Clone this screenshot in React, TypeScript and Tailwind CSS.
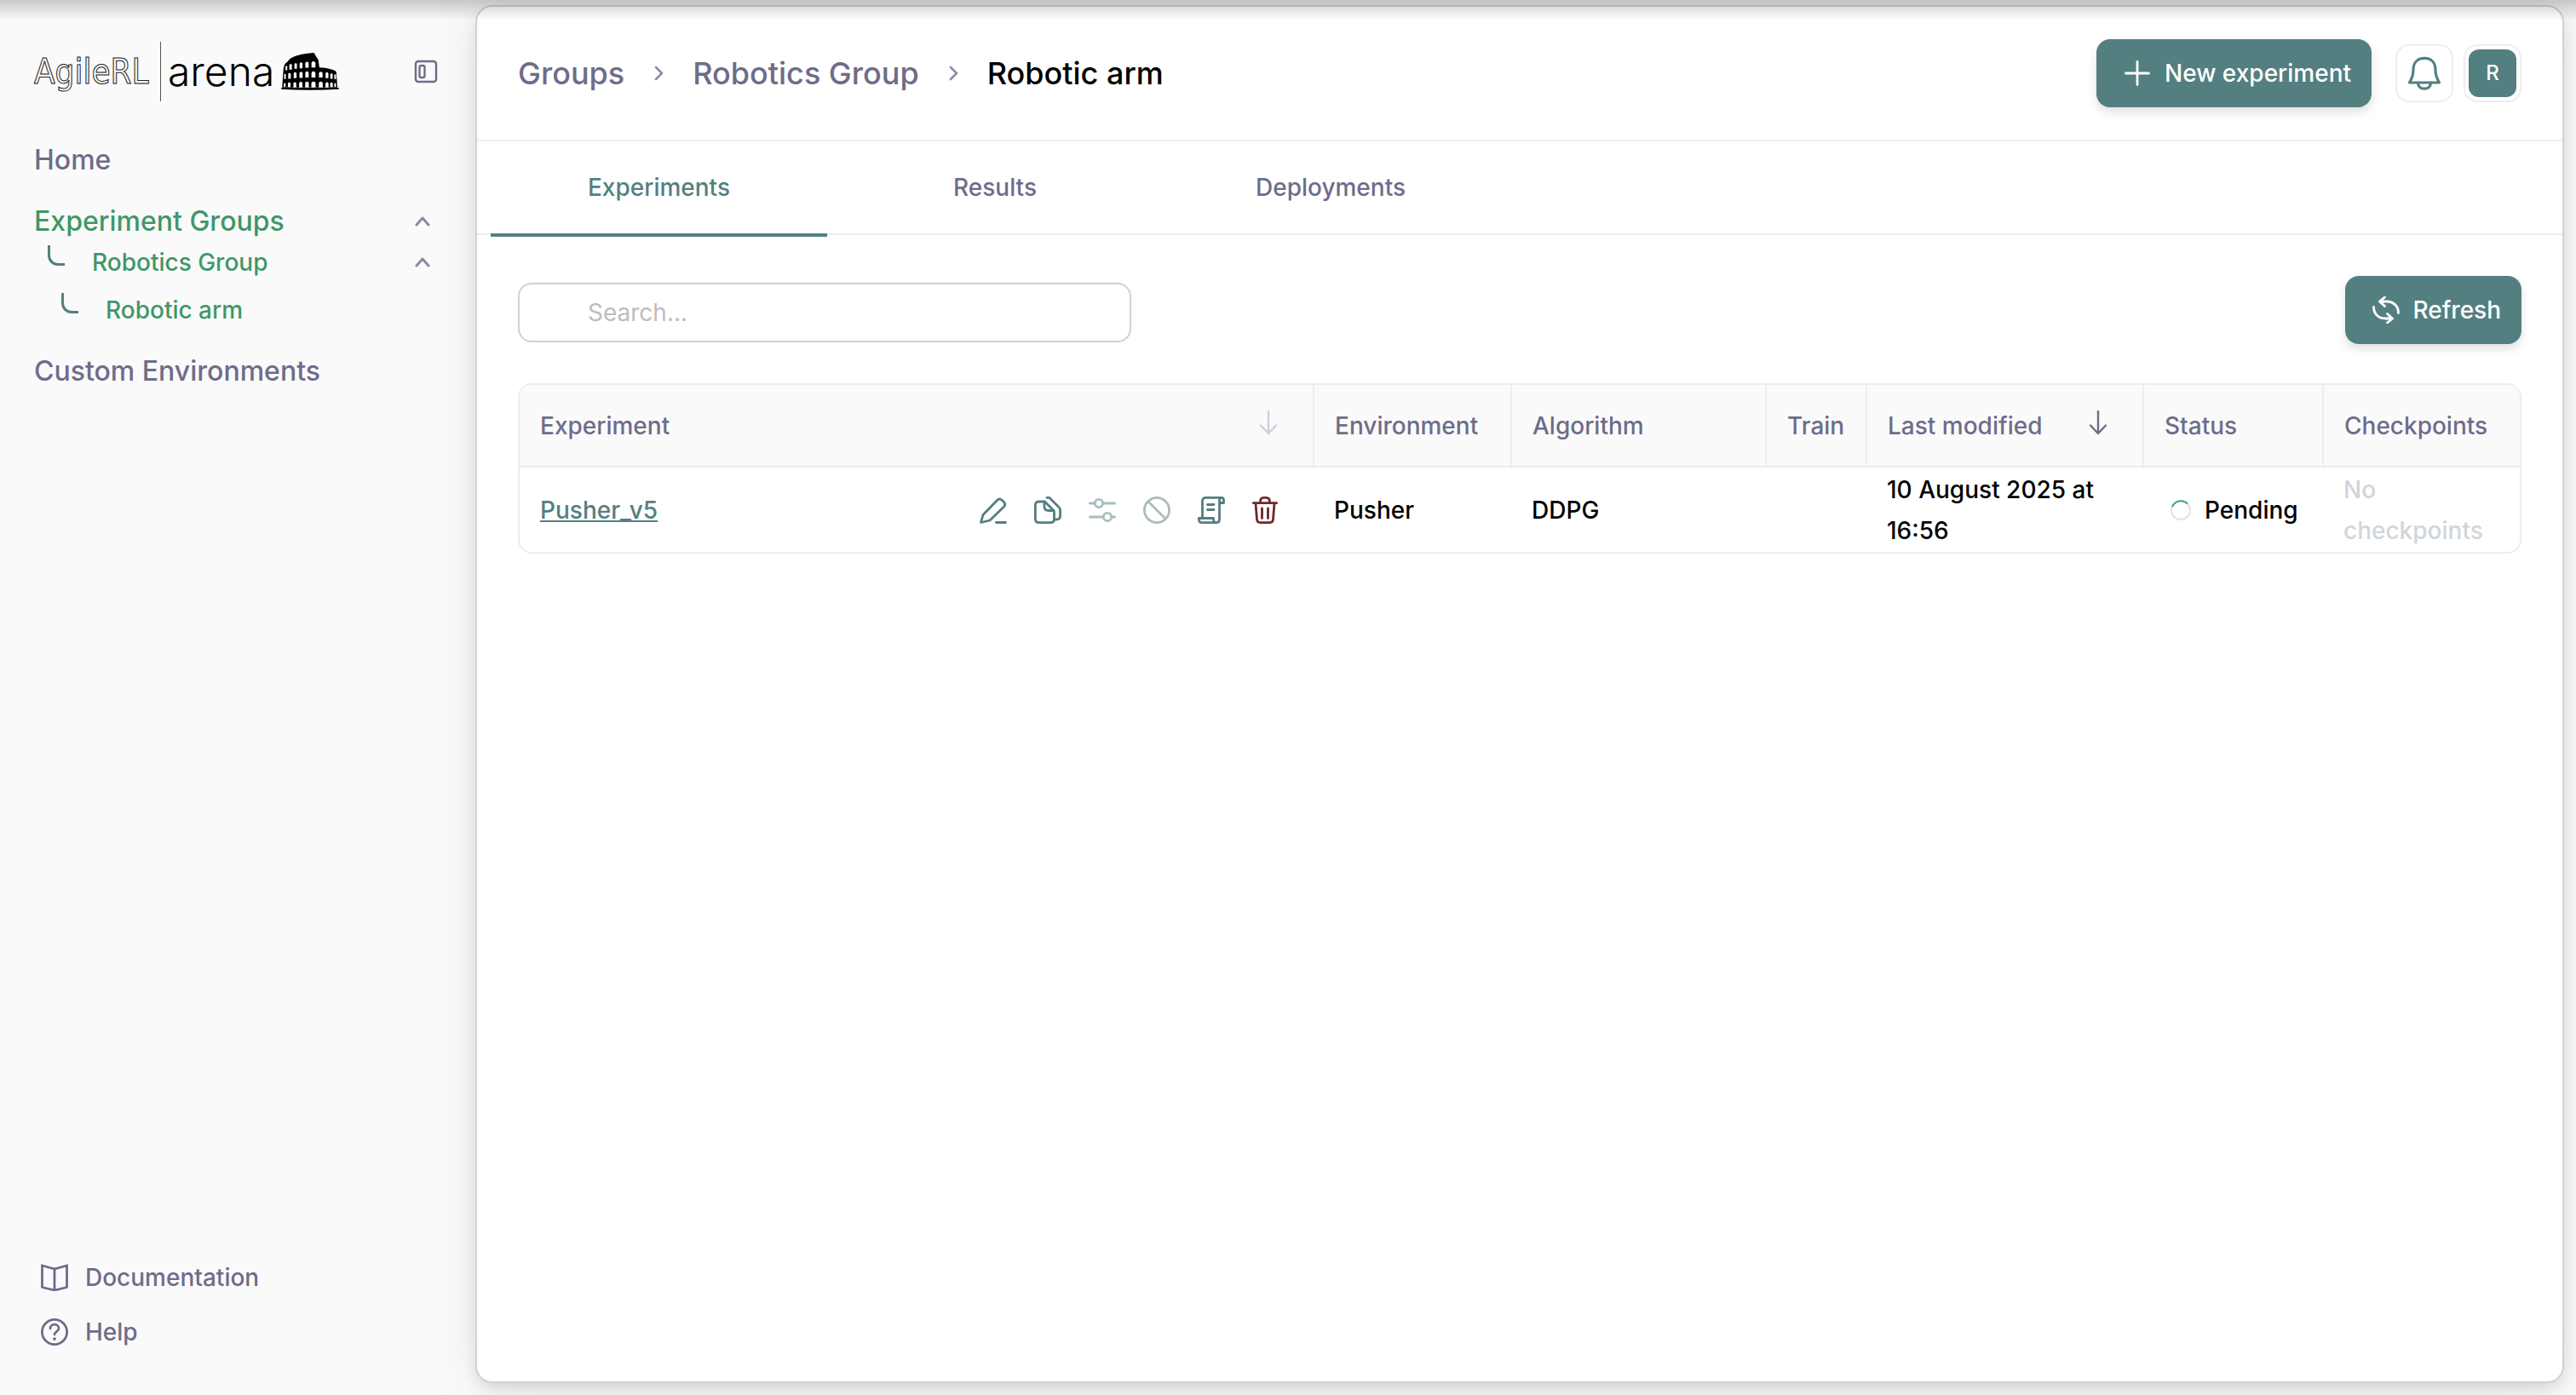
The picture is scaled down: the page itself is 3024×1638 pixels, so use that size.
import type { ReactNode } from "react";

type IconProps = { className?: string; children: ReactNode };

function Icon({ className = "", children }: IconProps) {
  return (
    <svg
      viewBox="0 0 32 32"
      fill="none"
      stroke="currentColor"
      strokeWidth="2.8"
      strokeLinecap="round"
      strokeLinejoin="round"
      className={`size-8 shrink-0 ${className}`}
      aria-hidden="true"
    >
      {children}
    </svg>
  );
}

// x centre, width, top, bottom of each arch
const arches = [
  [924, 6, 114, 130], [939, 9, 108, 128], [957, 9, 105, 125], [976, 10, 102, 123],
  [997, 12, 100, 121], [1020, 14, 98, 120],
  [919, 6, 143, 161], [935, 9, 140, 160], [955, 10, 137, 158], [976, 11, 135, 157],
  [997, 12, 134, 156], [1020, 14, 134, 156], [1046, 13, 135, 156], [1068, 10, 137, 158],
  [1084, 8, 141, 160], [1097, 6, 144, 162],
  [918, 6, 175, 189], [934, 9, 173, 190], [954, 10, 172, 191], [975, 12, 171, 191],
  [997, 13, 170, 191], [1020, 15, 170, 191], [1046, 14, 170, 191], [1068, 11, 172, 191],
  [1084, 9, 173, 190], [1097, 6, 175, 189],
];

function Colosseum() {
  return (
    <svg viewBox="906 68 204 133" className="h-11 w-[68px] shrink-0" aria-hidden="true">
      <path
        d="M909 191 L913 132 Q914 106 928 100 Q932 92 940 87 Q970 70 1022 68 L1030 82 L1037 92 L1041 120 L1062 122 Q1092 127 1101 135 L1105 191 Z"
        fill="#000"
      />
      <path d="M906 192 H1110 V197 Q1008 204 906 197 Z" fill="#000" />
      {arches.map(([x, w, top, bottom]) => (
        <path
          key={`${x}-${top}`}
          d={`M${x - w / 2} ${bottom} V${top + w / 2} A${w / 2} ${w / 2} 0 0 1 ${x + w / 2} ${top + w / 2} V${bottom} Z`}
          fill="#fafafa"
        />
      ))}
    </svg>
  );
}

function SidebarChevron() {
  return (
    <svg
      viewBox="0 0 18 12"
      fill="none"
      stroke="#8d8aa5"
      strokeWidth="3"
      strokeLinecap="round"
      strokeLinejoin="round"
      className="h-3 w-[18px]"
      aria-hidden="true"
    >
      <path d="M2 10l7-8 7 8" />
    </svg>
  );
}

function Sidebar() {
  return (
    <aside className="flex w-[558px] shrink-0 flex-col px-10 pb-[54px] pt-[49px] text-[#6e6c8a]">
      <div className="flex h-[70px] items-center justify-between pr-1">
        <a href="#" className="flex h-full items-center text-black">
          <span className="w-[148px] font-['DejaVu_Sans_Condensed','Liberation_Sans',sans-serif] text-[40px] leading-none text-transparent [-webkit-text-stroke:1px_#222]">
            AgileRL
          </span>
          <span className="h-full w-px bg-[#555]" />
          <span className="mx-2 text-[48px] font-light leading-none">arena</span>
          <Colosseum />
        </a>
        <button type="button" aria-label="Collapse sidebar">
          <svg
            viewBox="0 0 28 28"
            fill="none"
            stroke="currentColor"
            strokeWidth="2.4"
            className="size-7"
            aria-hidden="true"
          >
            <rect x="2" y="2" width="24" height="24" rx="3" />
            <rect x="6.5" y="7" width="6" height="14" rx="2" />
          </svg>
        </button>
      </div>

      <nav className="mt-[49px] flex flex-col font-medium">
        <a href="#" className="text-[32px] leading-10">
          Home
        </a>
        <div className="mt-8 flex items-center justify-between pr-[13px]">
          <a href="#" className="text-[32px] leading-10 text-[#3f9768]">
            Experiment Groups
          </a>
          <button type="button" aria-label="Toggle experiment groups">
            <SidebarChevron />
          </button>
        </div>
        <div className="mt-2 flex items-center justify-between pl-4 pr-[13px]">
          <div className="flex">
            <span className="h-6 w-5 rounded-bl-xl border-b-3 border-l-3 border-[#547f80]" />
            <a href="#" className="ml-8 text-[28px] leading-10 text-[#3f9768]">
              Robotics Group
            </a>
          </div>
          <button type="button" aria-label="Toggle Robotics Group">
            <SidebarChevron />
          </button>
        </div>
        <div className="mt-4 flex pl-8">
          <span className="h-6 w-5 rounded-bl-xl border-b-3 border-l-3 border-[#547f80]" />
          <a href="#" className="ml-8 text-[28px] leading-10 text-[#3f9768]">
            Robotic arm
          </a>
        </div>
        <a href="#" className="mt-8 text-[32px] leading-10">
          Custom Environments
        </a>
      </nav>

      <div className="mt-auto flex flex-col gap-6 pl-2 text-[28px] font-medium leading-10">
        <a href="#" className="flex items-center gap-5">
          <Icon>
            <path d="M1.5 2l14.5 4 14.5-4v25.5l-14.5 3.5-14.5-3.5z" strokeLinejoin="miter" />
            <path d="M16 6v25" />
          </Icon>
          Documentation
        </a>
        <a href="#" className="flex items-center gap-5">
          <Icon>
            <circle cx="16" cy="16" r="14.6" />
            <path d="M11 12c0-3 2.2-4.8 5-4.8s5 1.9 5 4.6c0 3.800-5 3.700-5 7.200" />
            <path d="M16 24v.3" strokeWidth="3.6" />
          </Icon>
          Help
        </a>
      </div>
    </aside>
  );
}

function CrumbChevron() {
  return (
    <svg
      viewBox="0 0 12 18"
      fill="none"
      stroke="#8d8aa5"
      strokeWidth="2.6"
      strokeLinecap="round"
      strokeLinejoin="round"
      className="h-[18px] w-3"
      aria-hidden="true"
    >
      <path d="M3 2l7 7-7 7" />
    </svg>
  );
}

function Header() {
  return (
    <header className="flex h-[158px] items-center justify-between border-b-2 border-[#ededed] px-12">
      <nav className="flex items-center gap-[34px] text-[36px] font-medium leading-none text-[#6e6c8a]">
        <a href="#">Groups</a>
        <CrumbChevron />
        <a href="#">Robotics Group</a>
        <CrumbChevron />
        <span className="text-black">Robotic arm</span>
      </nav>
      <div className="flex items-center">
        <button
          type="button"
          className="flex h-20 items-center gap-4 rounded-2xl bg-[#547f80] pl-8 pr-6 text-[28px] font-medium text-white shadow-[0_6px_12px_rgba(0,0,0,0.12)]"
        >
          <Icon>
            <path d="M16 2.500v27M2.500 16h27" />
          </Icon>
          New experiment
        </button>
        <button
          type="button"
          aria-label="Notifications"
          className="ml-7 flex size-[68px] items-center justify-center rounded-2xl border-2 border-[#ededed] text-[#547f80]"
        >
          <svg
            viewBox="0 0 40 40"
            fill="none"
            stroke="currentColor"
            strokeWidth="3.2"
            strokeLinecap="round"
            strokeLinejoin="round"
            className="size-10"
            aria-hidden="true"
          >
            <path d="M2.5 31C5.5 26 7 21 7 16C7 7.5 12 2.4 20 2.4S33 7.5 33 16C33 21 34.5 26 37.5 31Z" />
            <path d="M12.5 31c0 4.500 3 7.200 7.500 7.200s7.500-2.700 7.500-7.200" />
          </svg>
        </button>
        <button
          type="button"
          aria-label="Account"
          className="ml-3 flex size-[68px] items-center justify-center rounded-2xl border-2 border-[#ededed]"
        >
          <span className="flex size-14 items-center justify-center rounded-xl bg-[#547f80] text-[24px] font-medium text-white">
            R
          </span>
        </button>
      </div>
    </header>
  );
}

const tabs = ["Experiments", "Results", "Deployments"];

function Tabs() {
  return (
    <div role="tablist" className="flex h-[110px] border-b-2 border-[#ededed] pl-4">
      {tabs.map((tab, i) => (
        <button
          key={tab}
          type="button"
          role="tab"
          aria-selected={i === 0}
          className={
            i === 0
              ? "-mb-1 w-[395px] border-b-4 border-[#547f80] text-[28px] font-medium text-[#547f80]"
              : "w-[394px] text-[28px] font-medium text-[#6e6c8a]"
          }
        >
          {tab}
        </button>
      ))}
    </div>
  );
}

function SortArrow({ label, active }: { label: string; active?: boolean }) {
  return (
    <button
      type="button"
      aria-label={`Sort by ${label}`}
      className={active ? "text-[#6e6c8a]" : "text-[#d0d0da]"}
    >
      <svg
        viewBox="0 0 32 32"
        fill="none"
        stroke="currentColor"
        strokeWidth="2.4"
        strokeLinecap="round"
        strokeLinejoin="round"
        className="-mt-2 size-8"
        aria-hidden="true"
      >
        <path d="M16 3v26M7 19.5l9 9.5 9-9.5" />
      </svg>
    </button>
  );
}

const columns = [
  { name: "Experiment", width: "", sort: "idle" },
  { name: "Environment", width: "w-[232px]" },
  { name: "Algorithm", width: "w-[299px]" },
  { name: "Train", width: "w-[118px]" },
  { name: "Last modified", width: "w-[325px]", sort: "active" },
  { name: "Status", width: "w-[211px]" },
  { name: "Checkpoints", width: "w-[231px]" },
];

function RowActions() {
  return (
    <div className="flex gap-8 text-[#547f80]">
      <button type="button" aria-label="Edit">
        <Icon>
          <path d="M1.5 30.5L4 21.5 20.5 4.5Q23.5 1.5 26.5 4.5L28.5 6.5Q31 9.5 28.5 12L12 28Z" />
          <path d="M19.5 30.500h11" />
        </Icon>
      </button>
      <button type="button" aria-label="Duplicate">
        <Icon>
          <path d="M12 6H5.5Q1.4 6 1.4 10v16.500Q1.400 30.600 5.500 30.600H19Q23.500 30.600 23.500 26.500V18.500Q23.500 17 22.500 16L13.500 7Q12.500 6 12 6Z" />
          <path d="M12 6.5V12Q12 16.5 17 16.500H23" />
          <path d="M15 1.4H18L29 12.5Q30.6 14 30.6 16.5V22.5Q30.6 27 26 27H24" />
        </Icon>
      </button>
      <button type="button" aria-label="Configure" disabled className="opacity-50">
        <Icon>
          <circle cx="12" cy="8" r="4.7" />
          <circle cx="22" cy="24" r="4.7" />
          <path d="M1.4 8h5.9M16.7 8h13.9M1.4 24h15.9M26.7 24h3.9" />
        </Icon>
      </button>
      <button type="button" aria-label="Stop" disabled className="opacity-50">
        <Icon>
          <circle cx="16" cy="16" r="14.6" />
          <path d="M6 6l20 20" />
        </Icon>
      </button>
      <button type="button" aria-label="Logs">
        <Icon>
          <path d="M5.5 25V5.5Q5.5 1.4 9.5 1.4H27" />
          <path d="M25.5 26.5V5Q25.5 1.4 28 1.4Q30.6 1.4 30.6 5V7.5H25.5" />
          <path d="M25.5 26.5Q25.5 30.6 22 30.6H5Q1.4 30.6 1.4 27V25.5H18.5V27Q18.5 30.6 22 30.6" />
          <path d="M11.5 9.5h7.5M11.5 15.5h7.5" />
        </Icon>
      </button>
      <button type="button" aria-label="Delete" className="text-[#722727]">
        <Icon>
          <path d="M1.4 7.7H28.6M9.5 7.5V6Q9.5 1.4 13.5 1.4H16.5Q20.5 1.4 20.5 6V7.5" />
          <path d="M4 8L5.5 27Q5.8 30.6 9.5 30.6H20.5Q24.2 30.6 24.5 27L26 8" />
          <path d="M11.5 14v11.5M18.5 14v11.5" />
        </Icon>
      </button>
    </div>
  );
}

function ExperimentsTable() {
  return (
    <div className="mt-[46px] overflow-hidden rounded-2xl border-2 border-[#ededed]">
      <table className="w-full table-fixed border-collapse text-left text-[28px] font-medium leading-[48px]">
        <thead className="bg-[#fafafa] text-[#6e6c8a]">
          <tr className="h-24 border-b-2 border-[#ededed]">
            {columns.map((col) => (
              <th
                key={col.name}
                scope="col"
                className={`border-r-2 border-[#ededed] pl-6 pr-0 font-medium last:border-r-0 ${col.width}`}
              >
                {col.sort ? (
                  <div className="flex items-center justify-between pr-9">
                    {col.name}
                    <SortArrow label={col.name} active={col.sort === "active"} />
                  </div>
                ) : (
                  col.name
                )}
              </th>
            ))}
          </tr>
        </thead>
        <tbody className="text-black">
          <tr className="h-[100px]">
            <td className="pl-6">
              <div className="flex items-center justify-between pr-10">
                <a href="#" className="text-[#547f80] underline">
                  Pusher_v5
                </a>
                <RowActions />
              </div>
            </td>
            <td className="pl-6">Pusher</td>
            <td className="pl-6">DDPG</td>
            <td className="pl-6"></td>
            <td className="pl-6 pr-12">10 August 2025 at 16:56</td>
            <td className="pl-6">
              <div className="flex items-center gap-4 pl-2">
                <svg viewBox="0 0 24 24" fill="none" strokeWidth="2" className="size-6" aria-hidden="true">
                  <circle cx="12" cy="12" r="11" stroke="#e3e3e3" />
                  <path d="M2 8A11 11 0 0 1 20 4.5" stroke="#4a9d92" />
                </svg>
                Pending
              </div>
            </td>
            <td className="pl-6 pr-6 text-[#d1d5db]">No checkpoints</td>
          </tr>
        </tbody>
      </table>
    </div>
  );
}

export default function App() {
  return (
    <div className="relative flex min-h-screen bg-[#fafafa] font-['Inter','Liberation_Sans',sans-serif]">
      <Sidebar />
      <main className="mb-[14px] mr-[14px] mt-[6px] min-w-0 flex-1 rounded-[20px] border-2 border-[#d2d2d2] bg-white shadow-[0_8px_20px_-4px_rgba(0,0,0,0.14),0_4px_60px_rgba(0,0,0,0.08)]">
        <Header />
        <Tabs />
        <section className="px-12 pt-12">
          <div className="flex items-start justify-between">
            <div className="pt-2">
              <input
                type="text"
                aria-label="Search"
                placeholder="Search..."
                className="h-[70px] w-[720px] rounded-2xl border-2 border-[#cfcfda] bg-white pl-20 pr-6 text-[28px] placeholder:text-[#bdbdbd]"
              />
            </div>
            <button
              type="button"
              className="flex h-20 items-center gap-4 rounded-2xl bg-[#547f80] pl-8 pr-6 text-[28px] font-medium text-white shadow-[0_6px_12px_rgba(0,0,0,0.12)]"
            >
              <Icon>
                <path d="M1.5 12.5C1.5 20.5 7 26 15.5 26H23.5M17.5 20.5L23.5 26L17.5 31" />
                <path d="M30.5 19.5C30.5 11.5 25 6 16.5 6H8.5M14.5 1L8.5 6L14.5 11.5" />
              </Icon>
              Refresh
            </button>
          </div>
          <ExperimentsTable />
        </section>
      </main>
      <div className="pointer-events-none absolute inset-x-0 top-0 h-6 bg-linear-to-b from-black/20 to-transparent" />
    </div>
  );
}
